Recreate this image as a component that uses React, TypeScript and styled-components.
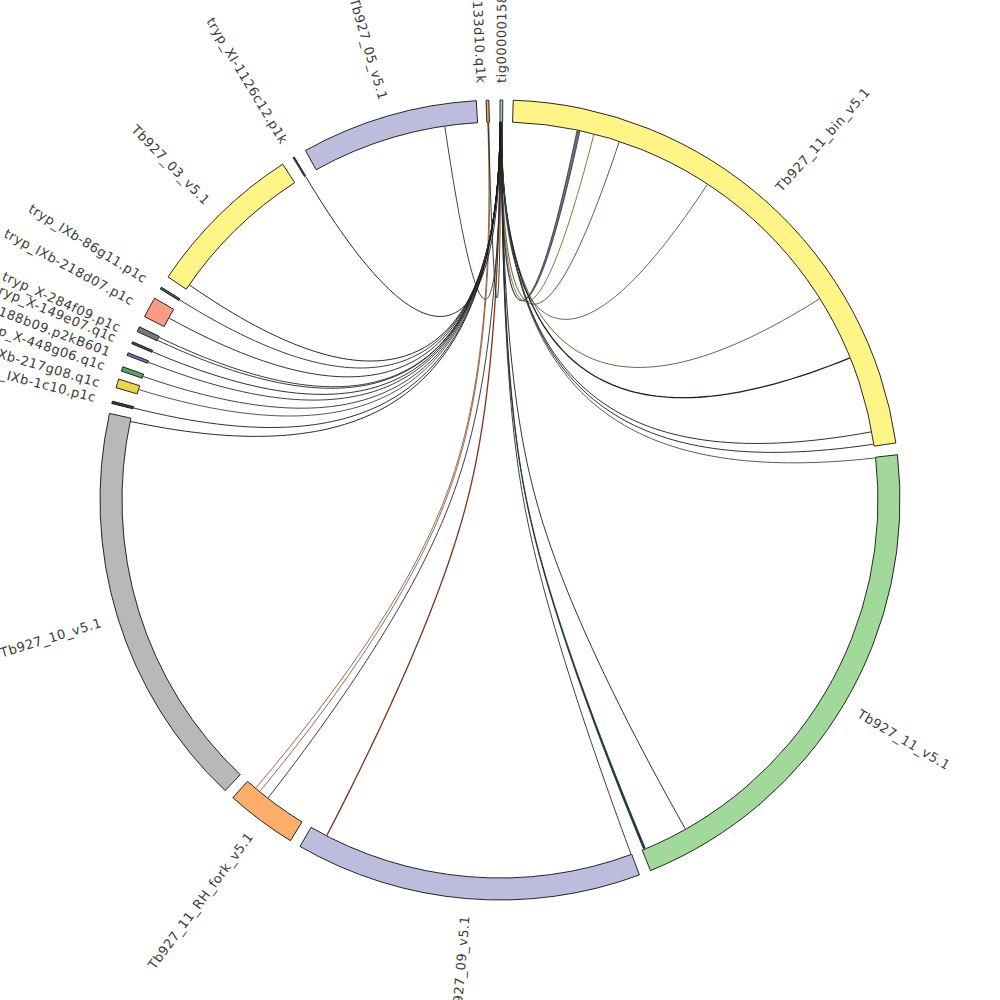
import React from 'react';
import styled, { createGlobalStyle } from 'styled-components';

type Segment = {
  name: string;
  start: number;
  end: number;
  color: string;
  labelAt?: number;
};

type Link = {
  from: number;
  to: number;
  color: string;
  width?: number;
  // ribbon ends (degrees wide) - when set the link is drawn as a filled band
  spanFrom?: number;
  spanTo?: number;
  fill?: string;
};

const CX = 500;
const CY = 500;
const R_IN = 378;
const R_OUT = 400;
const R_LINK = 377;
const R_LABEL = 417;

const segments: Segment[] = [
  { name: 'Tb927_11_bin_v5.1', start: 1.9, end: 81.8, color: '#fff587' },
  { name: 'Tb927_11_v5.1', start: 83.5, end: 157.9, color: '#a1d99b' },
  { name: 'Tb927_09_v5.1', start: 159.6, end: 210.0, color: '#bcbddc' },
  { name: 'Tb927_11_RH_fork_v5.1', start: 211.6, end: 221.9, color: '#fdae6b' },
  { name: 'Tb927_10_v5.1', start: 223.4, end: 282.5, color: '#b8b8b8' },
  { name: 'tryp_IXb-1c10.p1c', start: 283.95, end: 284.3, color: '#2b3b4d', labelAt: 284.2 },
  { name: 'tryp_IXb-217g08.q1c', start: 286.3, end: 287.6, color: '#e6d84a', labelAt: 286.3 },
  { name: 'tryp_X-448g06.q1c', start: 288.8, end: 289.45, color: '#5aa36c', labelAt: 288.7 },
  { name: 'tryp_X-188b09.p2kB601', start: 291.2, end: 291.6, color: '#7b6cb0', labelAt: 290.7 },
  { name: 'tryp_X-149e07.q1c', start: 293.0, end: 293.3, color: '#6b3b22', labelAt: 292.8 },
  { name: 'tryp_X-284f09.p1c', start: 294.9, end: 295.65, color: '#777777', labelAt: 294.3 },
  { name: 'tryp_IXb-218d07.p1c', start: 297.3, end: 300.3, color: '#fb9a85', labelAt: 298.4 },
  { name: 'tryp_IXb-86g11.p1c', start: 301.85, end: 302.15, color: '#3b5a78', labelAt: 301.9 },
  { name: 'Tb927_03_v5.1', start: 303.9, end: 327.1, color: '#fff587' },
  { name: 'tryp_XI-1126c12.p1k', start: 328.85, end: 329.05, color: '#2f6b3a', labelAt: 328.9 },
  { name: 'Tb927_05_v5.1', start: 330.9, end: 356.6, color: '#bcbddc' },
  { name: 'tryp_XI-1133d10.q1k', start: 358.0, end: 358.4, color: '#f4a460', labelAt: 357.4 },
  { name: 'tig00000158', start: 0.0, end: 0.4, color: '#9ecae1', labelAt: 0.2 },
];

const links: Link[] = [
  // towards Tb927_11_bin
  { from: 0.15, to: 12.0, color: '#333340', spanFrom: 0.15, spanTo: 0.45, fill: '#6d6d7d' },
  { from: 0.2, to: 14.4, color: '#6e6e1e' },
  { from: 0.2, to: 18.4, color: '#6b3b2a' },
  { from: 0.2, to: 33.3, color: '#3b5a78' },
  { from: 0.2, to: 57.8, color: '#55552a' },
  { from: 0.2, to: 67.9, color: '#2a1a10', width: 1.3 },
  { from: 0.2, to: 79.6, color: '#1a1a1a' },
  { from: 0.2, to: 81.5, color: '#1a1a1a' },
  { from: 0.25, to: 83.6, color: '#3c4c4c' },
  // down to Tb927_11 / Tb927_09
  { from: 0.3, to: 150.6, color: '#1a1a1a' },
  { from: 0.3, to: 157.5, color: '#123030', spanFrom: 0.1, spanTo: 0.3, fill: '#1d3b3b' },
  { from: 0.3, to: 159.7, color: '#2a2a1a' },
  { from: 0.05, to: 207.3, color: '#7a3418', width: 1.3 },
  // to the fork
  { from: 358.15, to: 220.3, color: '#8b5a3a' },
  { from: 358.3, to: 219.5, color: '#8b5a3a' },
  { from: 0.1, to: 217.9, color: '#22224a' },
  // short loops near the top
  { from: 358.2, to: 0.1, color: '#222222' },
  { from: 351.6, to: 0.1, color: '#4a2418' },
  { from: 329.0, to: 0.05, color: '#111111' },
  // left side
  { from: 0.0, to: 304.7, color: '#111111' },
  { from: 0.0, to: 302.0, color: '#1e2a38' },
  { from: 0.0, to: 298.8, color: '#1a1a1a' },
  { from: 0.0, to: 295.0, color: '#222222' },
  { from: 0.05, to: 295.5, color: '#222222' },
  { from: 0.0, to: 293.1, color: '#1a1a1a' },
  { from: 0.0, to: 291.4, color: '#2a2a2a' },
  { from: 0.0, to: 289.1, color: '#1f3a2a' },
  { from: 0.0, to: 287.0, color: '#3a4a4a' },
  { from: 0.0, to: 284.1, color: '#1a1a1a' },
  { from: 0.0, to: 282.0, color: '#111111' },
];

const rad = (deg: number) => (deg * Math.PI) / 180;
const polar = (deg: number, r: number): [number, number] => [
  CX + r * Math.sin(rad(deg)),
  CY - r * Math.cos(rad(deg)),
];
const fmt = (p: [number, number]) => `${p[0].toFixed(2)},${p[1].toFixed(2)}`;

// circos style link: quartic bezier with crest points on both ends
function curvePoints(a: number, b: number): [number, number][] {
  let d = Math.abs(a - b) % 360;
  if (d > 180) d = 360 - d;
  const dmid = R_LINK * Math.cos(rad(d / 2));
  const rb = 0.47 * dmid;
  const ux = Math.sin(rad(a)) + Math.sin(rad(b));
  const uy = Math.cos(rad(a)) + Math.cos(rad(b));
  const bis = (Math.atan2(ux, uy) * 180) / Math.PI;
  const ctrl = [polar(a, R_LINK), polar(a, rb), polar(bis, rb), polar(b, rb), polar(b, R_LINK)];
  const pts: [number, number][] = [];
  const n = 80;
  for (let i = 0; i <= n; i++) {
    const t = i / n;
    const s = 1 - t;
    const w = [s ** 4, 4 * s ** 3 * t, 6 * s * s * t * t, 4 * s * t ** 3, t ** 4];
    let x = 0;
    let y = 0;
    ctrl.forEach((p, k) => {
      x += p[0] * w[k];
      y += p[1] * w[k];
    });
    pts.push([x, y]);
  }
  return pts;
}

function linkPath(l: Link) {
  if (l.spanFrom === undefined) {
    const pts = curvePoints(l.from, l.to);
    return 'M' + pts.map(fmt).join(' L');
  }
  const a1 = l.from - (l.spanFrom ?? 0) / 2;
  const a2 = l.from + (l.spanFrom ?? 0) / 2;
  const b1 = l.to + (l.spanTo ?? 0) / 2;
  const b2 = l.to - (l.spanTo ?? 0) / 2;
  const first = curvePoints(a1, b1);
  const second = curvePoints(b2, a2);
  return 'M' + first.map(fmt).join(' L') + ' L' + second.map(fmt).join(' L') + ' Z';
}

function segmentPath(s: Segment) {
  const large = s.end - s.start > 180 ? 1 : 0;
  const o1 = polar(s.start, R_OUT);
  const o2 = polar(s.end, R_OUT);
  const i2 = polar(s.end, R_IN);
  const i1 = polar(s.start, R_IN);
  return `M${fmt(o1)} A${R_OUT},${R_OUT} 0 ${large} 1 ${fmt(o2)} L${fmt(i2)} A${R_IN},${R_IN} 0 ${large} 0 ${fmt(i1)} Z`;
}

const GlobalStyle = createGlobalStyle`
  html, body {
    margin: 0;
    padding: 0;
    background: #ffffff;
  }
  body {
    font-family: "DejaVu Sans", "Liberation Sans", sans-serif;
  }
`;

const Page = styled.div`
  width: 1000px;
  height: 1000px;
  overflow: hidden;
  background: #ffffff;
`;

const Canvas = styled.svg`
  display: block;
  width: 1000px;
  height: 1000px;
`;

const Ideogram = styled.path<{ $fill: string }>`
  fill: ${(p) => p.$fill};
  stroke: #111111;
  stroke-width: 0.9;
  stroke-linejoin: miter;
`;

const LinkCurve = styled.path<{ $stroke: string; $width: number }>`
  fill: none;
  stroke: ${(p) => p.$stroke};
  stroke-width: ${(p) => p.$width};
  stroke-linecap: round;
`;

const Ribbon = styled.path<{ $stroke: string; $fill: string }>`
  fill: ${(p) => p.$fill};
  stroke: ${(p) => p.$stroke};
  stroke-width: 0.8;
`;

const Label = styled.text`
  font-family: "DejaVu Sans", "Liberation Sans", sans-serif;
  font-size: 13px;
  letter-spacing: 0.5px;
  fill: #3c3c3c;
  dominant-baseline: central;
`;

function SegmentLabel({ seg }: { seg: Segment }) {
  const at = seg.labelAt ?? (seg.start + seg.end) / 2;
  const [x, y] = polar(at, R_LABEL);
  const norm = ((at % 360) + 360) % 360;
  const rightHalf = norm < 180;
  const rot = rightHalf ? norm - 90 : norm + 90;
  return (
    <Label
      x={x}
      y={y}
      textAnchor={rightHalf ? 'start' : 'end'}
      transform={`rotate(${rot.toFixed(2)} ${x.toFixed(2)} ${y.toFixed(2)})`}
    >
      {seg.name}
    </Label>
  );
}

export default function App() {
  return (
    <Page>
      <GlobalStyle />
      <Canvas viewBox="0 0 1000 1000">
        <g>
          {links.map((l, i) =>
            l.spanFrom !== undefined ? (
              <Ribbon key={i} d={linkPath(l)} $stroke={l.color} $fill={l.fill ?? l.color} />
            ) : (
              <LinkCurve key={i} d={linkPath(l)} $stroke={l.color} $width={l.width ?? 0.9} />
            )
          )}
        </g>
        <g>
          {segments.map((s) => (
            <Ideogram key={s.name} d={segmentPath(s)} $fill={s.color} />
          ))}
        </g>
        <g>
          {segments.map((s) => (
            <SegmentLabel key={s.name} seg={s} />
          ))}
        </g>
      </Canvas>
    </Page>
  );
}
